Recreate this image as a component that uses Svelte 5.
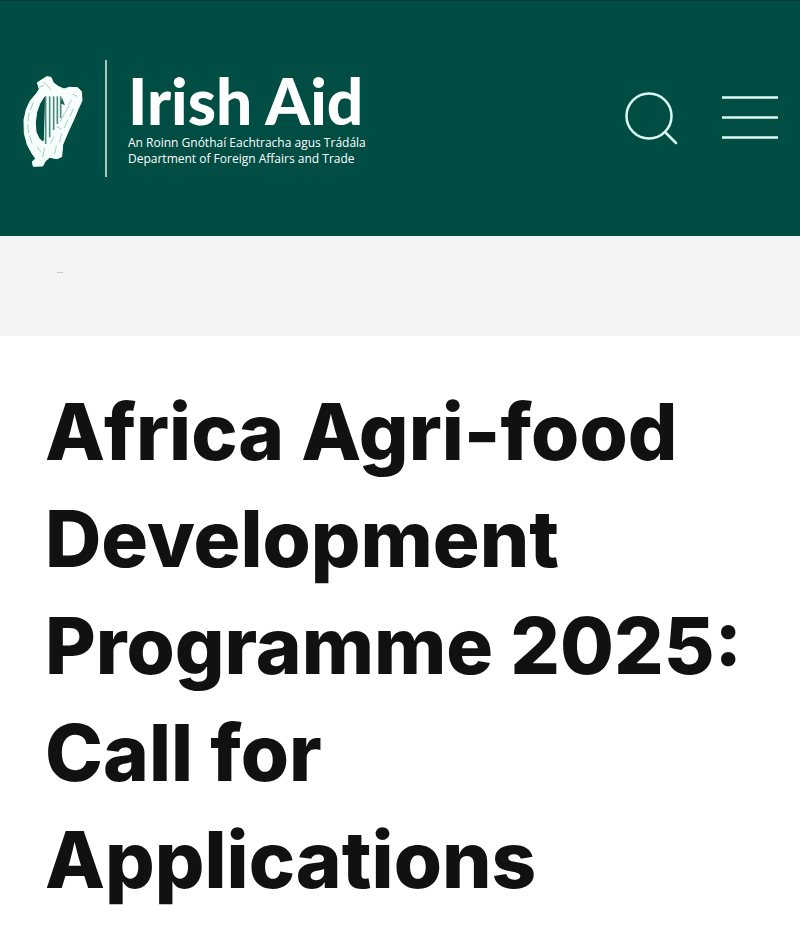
<script lang="ts">
    const title = "Africa Agri-food Development Programme 2025: Call for Applications";
    const strings = [
        { x: 107, end: 282 },
        { x: 119, end: 262 },
        { x: 131, end: 240 },
        { x: 142, end: 222 },
        { x: 152, end: 204 }
    ];
</script>

<header class="site-header">
    <a class="brand" href="/" aria-label="Irish Aid home">
        <svg class="harp" viewBox="36 75 186 282" aria-hidden="true">
            <path
                class="harp-frame"
                fill-rule="evenodd"
                d="M82 98 L110 80 L123 82 L130 98 L144 109 L162 117 L178 112 L203 113 L214 124 L216 152 L205 176 L192 207 L174 246 L158 284 L155 320 L141 326 L119 322 L106 333 L98 348 L70 349 L67 335 L77 326 L66 310 L52 284 L43 250 L42 210 L49 178 L61 152 L80 130 L88 117 Z
                M103 139 L107 139 L103 270 L99 276 L94 272 L87 265 L78 246 L76 218 L80 187 L89 161 Z"
            />
            {#each strings as s}
                <line class="harp-string" x1={s.x} y1="139" x2={s.x} y2={s.end} />
            {/each}
            <path
                class="harp-detail"
                d="M88 111 L101 106 M100 95 L123 119 M70 157 L61 180 M57 190 L54 214 M53 224 L56 248 M59 258 L66 280 M82 292 L92 304 M104 294 L98 321 M132 260 L121 280 M139 288 L134 311 M141 231 L154 237 M162 193 L151 213 M176 169 L164 190 M184 151 L176 165 M189 133 L201 139 M190 177 L180 199 M173 210 L163 233 M154 252 L149 277"
            />
            <path class="harp-notch" d="M156 143 L165 166 L151 160 Z" />
        </svg>
        <span class="divider"></span>
        <span class="brand-text">
            <span class="brand-name">Irish Aid</span>
            <span class="brand-dept">An Roinn Gnóthaí Eachtracha agus Trádála</span>
            <span class="brand-dept">Department of Foreign Affairs and Trade</span>
        </span>
    </a>

    <div class="actions">
        <button type="button" aria-label="Search">
            <svg class="search-icon" viewBox="0 0 54 54" aria-hidden="true">
                <circle cx="25" cy="25" r="22.5" />
                <path d="M41 41 L52 52" />
            </svg>
        </button>
        <button type="button" aria-label="Menu">
            <svg class="menu-icon" viewBox="0 0 56 44" aria-hidden="true">
                <path d="M0 1.5 H56 M0 21.5 H56 M0 41.5 H56" />
            </svg>
        </button>
    </div>
</header>

<div class="breadcrumb-bar">
    <span class="crumb-mark"></span>
</div>

<main>
    <h1>{title}</h1>
</main>

<style>
:global(body) {
    margin: 0;
    background-color: #fff;
}

.site-header {
    display: flex;
    justify-content: space-between;
    align-items: center;
    box-sizing: border-box;
    min-height: 236px;
    padding: 0 22px;
    background-color: #004d43;
    border-top: 1px solid #063a34;
}

/* Logo */
.brand {
    display: flex;
    align-items: center;
    gap: 21px;
    color: #fff;
    text-decoration: none;
}

.harp {
    width: 62px;
    height: 94px;
    margin-top: 6px;
}

.harp-frame {
    fill: #f6fffc;
    stroke: #f6fffc;
    stroke-width: 3;
    stroke-linejoin: round;
}

.harp-string {
    stroke: #4f8a7f;
    stroke-width: 5;
}

.harp-detail {
    fill: none;
    stroke: #a9c9c1;
    stroke-width: 3;
    stroke-linecap: round;
}

.harp-notch {
    fill: #1b6056;
}

.divider {
    width: 2px;
    height: 117px;
    background-color: #a5c8c0;
}

.brand-text {
    display: flex;
    flex-direction: column;
    padding-bottom: 2px;
    font-family: Lato, "Open Sans", sans-serif;
    white-space: nowrap;
}

.brand-name {
    margin-bottom: 2px;
    font-size: 64px;
    font-weight: 900;
    line-height: 64px;
}

.brand-dept {
    font-family: "Open Sans", "Noto Sans", sans-serif;
    font-size: 12px;
    font-weight: 500;
    line-height: 16px;
}

/* Header buttons */
.actions {
    display: flex;
    align-items: center;
    gap: 44px;
    margin-bottom: 2px;
}

button {
    display: flex;
    padding: 0;
    border: 0;
    background: none;
    cursor: pointer;
}

button svg {
    fill: none;
    stroke: #dcfaf3;
    stroke-width: 2.5;
    stroke-linecap: round;
}

.search-icon {
    width: 54px;
    height: 54px;
}

.menu-icon {
    width: 56px;
    height: 44px;
}

.menu-icon path {
    stroke-linecap: butt;
}

.breadcrumb-bar {
    display: flex;
    box-sizing: border-box;
    min-height: 100px;
    padding: 36px 57px;
    background-color: #f4f4f4;
}

.crumb-mark {
    width: 6px;
    height: 1px;
    background-color: #c8c8c8;
}

main {
    padding: 42px 45px;
}

h1 {
    margin: 0;
    color: #111;
    font-family: Inter, "Liberation Sans", sans-serif;
    font-size: 78px;
    font-weight: 800;
    line-height: 107px;
}
</style>
